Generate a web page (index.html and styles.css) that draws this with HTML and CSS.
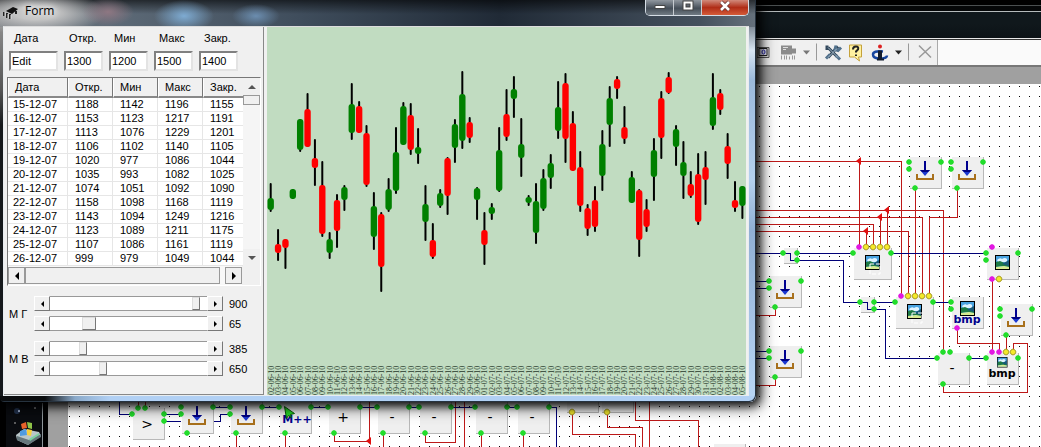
FILE: index.html
```html
<!DOCTYPE html>
<html lang="ru">
<head>
<meta charset="utf-8">
<title>Form</title>
<link rel="stylesheet" href="styles.css">
</head>
<body>
<div class="desktop">
  <div class="taskbar">
    <svg width="42" height="44" viewBox="0 403 42 44">
      <circle cx="17" cy="411" r="3" fill="#35507c" opacity=".6"/><circle cx="19" cy="411" r="1" fill="#cfe0ff"/><circle cx="15" cy="423" r="1" fill="#777"/><circle cx="35" cy="408" r="1" fill="#888"/>
      <path d="M16 435l8-6 15 3 2 4-13 9-11-5z" fill="#b9c6c9"/><path d="M17 436l12 4 12-6v3l-13 8-11-5z" fill="#66777c"/><path d="M29 439l10-6v2l-9 6z" fill="#7bd3a0"/>
      <path d="M21 424l5-2 1 6-5 1z" fill="#e8622b"/><path d="M27 422l5 1 0 6-4-1z" fill="#8fc449"/><path d="M20 431l6-2 1 6-7 1z" fill="#4f9be0"/><path d="M27 429l5 1-1 6-4-1z" fill="#f6cf3c"/>
    </svg>
  </div>
  <section class="editor">
    <div class="toolbar">
      <svg class="tools" width="180" height="24" viewBox="757 41 180 24">
        <path d="M757 48h12v10h-12z" fill="#ddd" stroke="#555"/><path d="M759 49h8v7h-8z" fill="#eef" stroke="#222"/><ellipse cx="763.5" cy="52.5" rx="1.5" ry="2" fill="none" stroke="#22a"/>
        <path d="M781 46h11v3h4v5h-4v1h-11z" fill="#8b8b8b"/><path d="M783 48h5M783 50h3" stroke="#ddd"/><path d="M781.500 56v4M784.500 56v4M786.500 56v4M789.500 57v3M792.500 56v4M794.500 56v4" stroke="#999"/>
        <path d="M803 51h7l-3.500 4z" fill="#777"/><path d="M816.500 44v17M908.500 44v17" stroke="#999"/>
        <path d="M828 48l9 9M827 46v3h3M838 47l-10 11" fill="none" stroke="#31475b" stroke-width="3"/><path d="M836 46l-1 4 3 1 3-3M826 59l4-4M836 56l4 4" fill="none" stroke="#52718c" stroke-width="3"/><path d="M828 48l10 10M837 49l-9 9" stroke="#a8bccb"/>
        <path d="M849.500 45.500h12v12h-3l1 4-5-4h-5z" fill="#fff1a0" stroke="#c5a23b"/><path d="M853 50q0-3 3-3t2 3l-2 2v1M856 55v1.500" fill="none" stroke="#222" stroke-width="2"/>
        <circle cx="880" cy="47" r="2" fill="#d22"/><path d="M883 52q-10-1-10 3t7 4 7-3" fill="none" stroke="#1746a0" stroke-width="2.500"/><path d="M878 51h4v8h2v2h-7v-2h1z" fill="#111b2d"/>
        <path d="M895 51h7l-3.500 4z" fill="#222"/><path d="M919 46l12 12M931 47l-12 11" stroke="#999" stroke-width="1.500"/>
      </svg>
    </div>
    <div class="workspace"></div>
  </section>

  <svg class="diagram">
    <defs>
      <pattern id="grid" x="9" y="6" width="10" height="10" patternUnits="userSpaceOnUse"><rect width="1" height="1" fill="#000"/></pattern>
      <g id="box"><path d="M0 0h32v32h-32z" fill="#b8b8b8"/><path d="M0 0h31v31h-31z" fill="#efefef"/></g>
      <g id="dl"><use href="#box"/><path d="M15 4v12" stroke="#000090" stroke-width="2"/><path d="M10 13h10l-5 6z" fill="#1c38d0"/><path d="M10 13h10l-2 2h-6z" fill="#000080"/><path d="M7 17v5h16v-5" fill="none" stroke="#a8701c" stroke-width="2"/></g>
      <path id="p" d="M-3 0L-2-2 0-3 2-2 3 0 2 2 0 3-2 2z"/>
      <g id="sp"><path d="M0 0h14v16h-14z" fill="#b8b8b8"/><path d="M0 0h13v15h-13z" fill="#efefef"/></g>
      <g id="wide"><path d="M0 0h38v32h-38z" fill="#b8b8b8"/><path d="M0 0h37v31h-37z" fill="#efefef"/></g>
      <g id="pic"><path d="M0 0h15v15h-15z" fill="#000"/><path d="M1 1h13v13h-13z" fill="#4aa3e0"/><path d="M2 5q3-3 5-1 3-2 5 0v3h-9z" fill="#dff3ff"/><path d="M1 7l4-1 9 4v2l-7-1-6 1z" fill="#1d7a45"/><path d="M1 12l8-1 5 1v2h-13z" fill="#d7ea90"/><path d="M7 9l7-4v6z" fill="#185878"/></g>
      <path id="sel" d="M1 1h10v10h-10z" fill="none" stroke="#fff" stroke-dasharray="4 2"/>
      <path id="j" d="M-3 0l5-4v8z"/>
    </defs>
    <rect x="68" y="84" width="100%" height="100%" fill="#fff"/><rect x="68" y="84" width="100%" height="100%" fill="url(#grid)"/>
    <g>
      <use href="#dl" x="910" y="157"/><use href="#dl" x="952" y="157"/><use href="#dl" x="770" y="276"/><use href="#dl" x="770" y="346"/><use href="#dl" x="1001" y="304"/><use href="#dl" x="182" y="402"/><use href="#dl" x="231" y="402"/>
      <use href="#box" x="133" y="408"/><use href="#box" x="280" y="402"/><use href="#box" x="329" y="402"/><use href="#box" x="378" y="402"/><use href="#box" x="420" y="402"/><use href="#box" x="476" y="402"/><use href="#box" x="518" y="402"/><use href="#box" x="567" y="381"/><use href="#box" x="602" y="381"/><use href="#box" x="714" y="444"/>
      <use href="#sp" x="784" y="248"/><use href="#sp" x="861" y="297"/>
      <use href="#wide" x="854" y="248"/><use href="#wide" x="896" y="297"/><use href="#box" x="987" y="248"/><use href="#box" x="952" y="297"/><use href="#box" x="938" y="353"/><use href="#box" x="987" y="353"/>
      <use href="#pic" x="865" y="255"/><use href="#sel" x="869" y="263"/><use href="#pic" x="907" y="304"/><use href="#sel" x="911" y="312"/><use href="#pic" x="995" y="255"/><use href="#pic" x="960" y="301"/><g transform="translate(997 357) scale(.7)"><use href="#pic"/></g>
    </g>
    <g class="wire red">
      <path d="M750 161.500H901.500V296M859.500 161V247M750 210.500H943.500V352M750 217.500H922.500V296M750 224.500H873.500V247M750 231.500H908.500V296M866.500 231V247M880.500 217V247M887.500 210V247M915.500 188V296M957.500 188V217.500H929.500V296M775.500 307V315.500H750M775.500 377V385.500H750M957.500 328V343.500H999.500V352M992.500 279V352M1006.500 335V352M1013.500 352V343.500H1027.500V392.500H943.500V384"/>
      <path d="M138.500 400V408M145.500 400V408M236.500 433V447M285.500 433V447M334.500 433V441.500H369.500V400M383.500 433V447M425.500 433V442.500H455.500V400M464.500 400V447M481.500 433V447M523.500 433V447M572.500 412V434.500H635.500V447M607.500 412V427.500H642.500V447M635.500 400V420.500H698.500V447M649.500 400V447"/>
    </g>
    <g class="wire navy">
      <path d="M750 253.500H783M797 253.500H853M891 253.500H986M783 253.500H790.500V260.500H797M797 260.500H843.500V302.500H860M867.500 302.500V309.500H874M874 302.500H895M860 302.500H868M874 309.500H885.500V358.500H937M933 302.500H951M969 358.500H986M750 281.500H769M750 288.500H769M750 351.500H769M750 358.500H769"/>
      <path d="M119.500 400V414.500H132M164 414.500H181M164 421.500H181M213 407.500H230M214 421.500H220.500V414.500H230M262 407.500H279M311 407.500H328M360 407.500H377M409 407.500H419M451 407.500H475M507 407.500H517M549 407.500H556.500V447"/>
    </g>
    <g fill="#e01010"><use href="#j" x="859" y="161"/><use href="#j" x="866" y="231"/><use href="#j" x="880" y="217"/><use href="#j" x="887" y="210"/><use href="#j" x="369" y="441"/></g>
    <g id="ports"></g>
    <g class="node-text">
      <text class="sign" x="147" y="429">&gt;</text><text class="sign" x="343" y="422">+</text><text class="sign" x="392" y="422">-</text><text class="sign" x="434" y="422">-</text><text class="sign" x="490" y="422">-</text><text class="sign" x="532" y="422">-</text><text class="sign" x="952" y="373">-</text>
      <text class="bold blue" x="297" y="423">M++</text><text class="bold blue" x="967" y="323">bmp</text><text class="bold" x="1002" y="377">bmp</text>
    </g>
    <path d="M284.500 406.500l10 7-4 1 1 3-3-2-2 3z" fill="#27d827" stroke="#065c06"/>
  </svg>

  <main class="window">
    <header class="titlebar">
      <svg width="16" height="16" viewBox="0 0 16 16"><path d="M3 6l7-4 5 2-6 5z" fill="#111"/><path d="M1 7v4M4 8v5M7 9v5M13 6v3" stroke="#222" stroke-width="2"/><path d="M2 7v4M5 9v4M8 10v4" stroke="#ddd"/></svg>
      <h1>Form</h1>
      <div class="caption">
        <button aria-label="Свернуть"><svg width="12" height="12"><path d="M1 5.500h10v3h-10z" fill="#fff" stroke="#444"/></svg></button>
        <button aria-label="Развернуть"><svg width="12" height="12"><path d="M2.500 2.500h7v6h-7z" fill="none" stroke="#444" stroke-width="4"/><path d="M2.500 2.500h7v6h-7z" fill="none" stroke="#fff" stroke-width="2"/></svg></button>
        <button class="close" aria-label="Закрыть"><svg width="12" height="12"><path d="M2 2l8 8M10 2l-8 8" stroke="#633" stroke-width="4"/><path d="M2 2l8 8M10 2l-8 8" stroke="#fff" stroke-width="2.500"/></svg></button>
      </div>
    </header>
    <div class="client">
      <section class="panel">
        <form class="fields">
          <label>Дата<input value="Edit"></label>
          <label>Откр.<input value="1300"></label>
          <label>Мин<input value="1200"></label>
          <label>Макс<input value="1500"></label>
          <label>Закр.<input value="1400"></label>
        </form>
        <div class="list">
          <table>
            <colgroup><col class="wide"><col><col><col><col class="last"></colgroup>
            <thead><tr><th>Дата</th><th>Откр.</th><th>Мин</th><th>Макс</th><th>Закр.</th></tr></thead>
            <tbody>
              <tr><td>15-12-07</td><td>1188</td><td>1142</td><td>1196</td><td>1155</td></tr>
              <tr><td>16-12-07</td><td>1153</td><td>1123</td><td>1217</td><td>1191</td></tr>
              <tr><td>17-12-07</td><td>1113</td><td>1076</td><td>1229</td><td>1201</td></tr>
              <tr><td>18-12-07</td><td>1106</td><td>1102</td><td>1140</td><td>1105</td></tr>
              <tr><td>19-12-07</td><td>1020</td><td>977</td><td>1086</td><td>1044</td></tr>
              <tr><td>20-12-07</td><td>1035</td><td>993</td><td>1082</td><td>1025</td></tr>
              <tr><td>21-12-07</td><td>1074</td><td>1051</td><td>1092</td><td>1090</td></tr>
              <tr><td>22-12-07</td><td>1158</td><td>1098</td><td>1168</td><td>1119</td></tr>
              <tr><td>23-12-07</td><td>1143</td><td>1094</td><td>1249</td><td>1216</td></tr>
              <tr><td>24-12-07</td><td>1123</td><td>1089</td><td>1211</td><td>1175</td></tr>
              <tr><td>25-12-07</td><td>1107</td><td>1086</td><td>1161</td><td>1119</td></tr>
              <tr><td>26-12-07</td><td>999</td><td>979</td><td>1049</td><td>1044</td></tr>
            </tbody>
          </table>
          <div class="vbar"><button class="arrow up" aria-label="Вверх"></button><div class="vthumb"></div><button class="arrow down" aria-label="Вниз"></button></div>
          <div class="hbar"><button class="arrow left" aria-label="Влево"></button><div class="hthumb"></div><button class="arrow right" aria-label="Вправо"></button></div>
        </div>
        <div class="scale">
          <span class="name">М Г</span>
          <div class="bars">
            <div class="bar"><button class="arrow left" aria-label="Меньше"></button><input id="g1" aria-label="М Г 1" type="range" max="1000" value="953"><button class="arrow right" aria-label="Больше"></button><output for="g1">900</output></div>
            <div class="bar"><button class="arrow left" aria-label="Меньше"></button><input id="g2" class="big" aria-label="М Г 2" type="range" max="1000" value="224"><button class="arrow right" aria-label="Больше"></button><output for="g2">65</output></div>
          </div>
        </div>
        <div class="scale">
          <span class="name">М В</span>
          <div class="bars">
            <div class="bar"><button class="arrow left" aria-label="Меньше"></button><input id="v1" aria-label="М В 1" type="range" max="1000" value="195"><button class="arrow right" aria-label="Больше"></button><output for="v1">385</output></div>
            <div class="bar"><button class="arrow left" aria-label="Меньше"></button><input id="v2" aria-label="М В 2" type="range" max="1000" value="329"><button class="arrow right" aria-label="Больше"></button><output for="v2">650</output></div>
          </div>
        </div>
      </section>
      <svg class="chart" id="chart" viewBox="267 27 479 368" preserveAspectRatio="xMinYMin meet"></svg>
    </div>
  </main>
</div>
<script src="chart.js"></script>
</body>
</html>
```
FILE: styles.css
```css
* { box-sizing: border-box; }
body { margin: 0; background: #000; font: 11px/14px "Liberation Sans", Arial, sans-serif; color: #000; }
button { padding: 0; margin: 0; border: 0; font: inherit; }

.desktop { position: relative; height: 100vh; overflow: hidden; background: linear-gradient(#000 0 5px, #4a4f50 5px 6px, #050708 6px 11px, #b5babb 11px 12px, #10181c 12px 24px, #0c1216 38px, #e8e8e8 38px 39px, #333 39px 40px, #000 40px); }
.taskbar { position: absolute; left: 0; bottom: 0; width: 43px; height: 44px; background: linear-gradient(90deg, #000 0 6px, #0a0c10 6px); border-right: 1px solid #8f979c; }
.editor { position: absolute; left: 48px; right: 0; top: 40px; bottom: 0; background: #a0a0a0; }
.toolbar { display: flex; height: 27px; background: #fafafa; border-bottom: 2px solid #777; }
.tools { display: block; box-sizing: content-box; padding-left: 709px; background: #f0f0f0; border-right: 1px solid #aaa; height: 25px; }
.diagram { position: absolute; left: 0; top: 0; width: 100%; height: 100%; }
.wire { fill: none; stroke-width: 1; }
.wire path { shape-rendering: crispEdges; }
.red { stroke: #bd1818; }
.navy { stroke: #000078; }
.node-text { text-anchor: middle; }
.sign { font: 14px "DejaVu Sans", sans-serif; }
.bold { font: bold 11px "DejaVu Sans", sans-serif; }
.blue { fill: #00008c; }

.window {
  position: absolute; left: 0; top: 0; width: 756px; padding: 0 7px 6px 3px; border-radius: 0 0 6px 4px;
  background:
    radial-gradient(ellipse 30px 16px at 184px 16px, #7eabd2, transparent),
    radial-gradient(ellipse 26px 14px at 108px 12px, #8e7782, transparent),
    radial-gradient(ellipse 70px 22px at 36px 13px, #c4c4c4 30%, transparent),
    radial-gradient(ellipse 24px 12px at 256px 16px, #6b8daf, transparent),
    linear-gradient(#0009, #0000 14px) 0 0 / 100% 26px no-repeat,
    linear-gradient(90deg, #777b80, #5c6976 120px, #3f4d5c 300px, #202a36 500px, #44505d 700px, #66717c) 0 0 / 100% 27px no-repeat,
    linear-gradient(90deg, #0a0c0e 45px, #8aa9c9 75px, #b1d0f4 110px) 0 100% / 100% 6px no-repeat,
    linear-gradient(#66717c 20px, #d8e5f2 50px, #9bb9da 80px, #b4d0ee 180px, #90afd3 230px, #b9d6f5) 100% 0 / 7px 100% no-repeat,
    linear-gradient(#888 30px, #555 90px, #15181b 125px);
  box-shadow: inset -1px -1px #26323e, 3px 3px 8px #000c, 4px 4px 16px #000c;
}
.titlebar { display: flex; align-items: center; height: 26px; position: relative; }
.titlebar h1 { margin: 0 0 4px 6px; font: 12px/16px "Open Sans", "Noto Sans", sans-serif; text-shadow: 0 0 6px #fff, 0 0 8px #fff; }
.caption { display: flex; align-self: flex-start; margin-left: auto; height: 16px; border: 1px solid #d5dde5; border-top: 0; border-radius: 0 0 5px 5px; overflow: hidden; }
.caption button { display: grid; place-items: start center; width: 28px; height: 15px; background: linear-gradient(#90979f, #454e58 55%, #717b84); border-right: 1px solid #c6cbd0; }
.caption .close { width: 46px; border: 0; background: linear-gradient(#d18a7b, #b02d17 50%, #d45b38); }
.client { display: flex; border: 1px solid #e8edf0; border-top-color: #ddd; background: #f0f0f0; }
.panel { width: 260px; padding-bottom: 17px; border-right: 1px solid #888; border-bottom: 1px solid #888; }
.fields { display: grid; grid-template-columns: 49px repeat(4, 39px); gap: 6px; padding: 4px 5px 6px; }
.fields label { display: flex; flex-direction: column; gap: 6px; text-indent: 5px; }
.fields input { width: 100%; height: 20px; padding: 0 1px; border: 2px solid; border-color: #808080 #e3e3e3 #e3e3e3 #808080; background: #fff; font: inherit; text-indent: 0; outline: 0; border-radius: 0; }
.list { display: grid; grid-template-columns: 1fr 17px; margin: 0 2px 0 3px; border: 1px solid #888; border-color: #777 #fff #fff #777; background: #f0f0f0; }
table { width: 100%; table-layout: fixed; border-collapse: separate; border-spacing: 0; background: #fff; }
col { width: 45px; } col.wide { width: 60px; } col.last { width: 40px; }
th, td { padding: 0; font-weight: normal; text-align: left; white-space: nowrap; overflow: hidden; }
thead th { height: 20px; padding-left: 6px; background: #f0f0f0; border-right: 1px solid #777; border-bottom: 2px solid #888; border-left: 1px solid #fff; line-height: 18px; }
th:last-child { border-right: 0; }
td { height: 14px; padding-left: 7px; line-height: 13px; border-right: 1px solid #e6e6e6; border-bottom: 1px solid #e6e6e6; }
td:first-child { padding-left: 5px; }
td:last-child { border-right: 0; }
.vbar { display: flex; flex-direction: column; background: #f5f5f5; }
.vbar .down { margin-top: auto; }
.vthumb { height: 10px; border: 1px solid #999; background: #f0f0f0; }
.hbar { display: flex; width: 234px; height: 19px; padding-top: 1px; background: #f8f8f8; }
.hbar .arrow { height: 17px; border: 1px solid #999; }
.hthumb { flex: 1; height: 17px; margin-right: 5px; border: 1px solid #999; background: #f0f0f0; }
.arrow { display: grid; place-items: center; width: 17px; height: 17px; background: #f0f0f0; flex: none; }
.arrow::before { content: ""; border: 4px solid transparent; }
.up::before { border-top: 0; border-bottom-color: #555; }
.down::before { border-bottom: 0; border-top-color: #555; }
.left::before { border-left: 0; border-right-color: #000; }
.right::before { border-right: 0; border-left-color: #000; }
.scale { display: flex; align-items: center; margin: 10px 0 0 5px; }
.name { width: 25px; white-space: nowrap; }
.bars { display: grid; gap: 5px; }
.bar { display: flex; align-items: center; height: 15px; }
.bar .arrow { width: 16px; height: 15px; border: 1px solid #777; border-color: #fff #777 #777 #fff; }
.bar .arrow::before { border-width: 3px; }
.bar .left::before { border-left: 0; } .bar .right::before { border-right: 0; }
.bar output { margin-left: 6px; }
input[type="range"] { appearance: none; width: 157px; height: 15px; margin: 0; background: #fff; border: 1px solid #999; border-width: 1px 0; }
input[type="range"]::-webkit-slider-thumb { appearance: none; width: 8px; height: 13px; background: #f0f0f0; border: 1px solid #777; border-color: #ddd #777 #777 #ddd; }
input.big::-webkit-slider-thumb { width: 14px; }
.chart { display: block; flex: 1; min-width: 0; margin: 0 2px 0 3px; background: #c1dcc1; overflow: visible; }
.date { font: 8px "Liberation Serif", serif; fill: #26382a; }
```
FILE: chart.js
```js
const NS = "http://www.w3.org/2000/svg";
function add(parent, tag, attrs, text) {
  const el = document.createElementNS(NS, tag);
  for (const k in attrs) el.setAttribute(k, attrs[k]);
  if (text) el.textContent = text;
  parent.appendChild(el);
}

// wick top, wick bottom, body top, body bottom, direction
const candles = `183 212 198 210 g|229 261 244 253 r|239 269 239 248 r|189 199 189 199 g|119 152 119 150 g|93 147 109 147 r|139 186 158 168 r|161 237 185 234 r|232 259 239 253 g|194 248 200 231 r|185 211 187 200 g|83 140 104 133 g|101 133 106 133 r|125 187 133 185 r|192 250 206 237 g|212 292 214 267 r|178 212 189 210 g|127 194 152 191 g|102 145 106 145 g|103 155 115 150 r|128 164 147 154 g|185 241 204 222 g|223 259 240 257 r|189 208 193 206 g|157 215 158 196 r|119 163 124 148 g|71 149 94 141 g|117 143 122 138 r|187 220 188 200 g|212 265 230 245 r|203 220 207 214 g|127 192 150 191 g|89 141 114 137 r|76 118 89 99 g|118 177 144 158 g|195 206 197 203 g|183 244 201 233 g|169 211 178 209 g|154 189 163 178 g|81 139 107 131 g|73 163 83 139 r|111 171 123 171 r|151 212 167 206 r|204 236 208 229 r|186 232 200 227 r|130 191 144 176 g|86 147 98 125 g|76 99 79 89 r|106 144 127 139 r|171 203 177 203 g|189 257 190 240 r|199 232 209 227 r|138 201 150 177 g|91 159 98 138 r|72 94 77 93 r|125 166 129 147 g|141 199 162 176 g|171 198 184 196 r|153 225 174 222 r|151 205 167 180 r|73 130 97 126 g|89 115 93 110 r|133 179 146 164 r|181 212 200 208 r|186 219 186 206 g`;
const chart = document.getElementById("chart");
const step = 7.37;
candles.split("|").forEach((row, i) => {
  const [wt, wb, bt, bb, dir] = row.split(" ");
  const x = 270.7 + i * step;
  add(chart, "rect", { x: x - 1, y: wt, width: 2, height: wb - wt, rx: 1, fill: "#000" });
  add(chart, "rect", { x: x - 3.2, y: bt, width: 6.4, height: bb - bt, rx: 3, fill: dir === "g" ? "#008000" : "#f00" });
  const d = new Date(Date.UTC(2010, 5, 2 + i));
  const p = n => String(n).padStart(2, "0");
  add(chart, "text", { class: "date", transform: `translate(${x + 3} 395) rotate(-90)` }, `${p(d.getUTCDate())}-${p(d.getUTCMonth() + 1)}-10`);
});

// connection points of the diagram nodes, grouped by colour
const points = {
  "#22dd2b": "909,162 909,169 941,162 915,188 951,162 951,169 983,162 957,188 769,281 769,288 801,281 775,307 769,351 769,358 801,351 775,377 1000,309 1000,316 1032,309 1006,335 181,407 181,414 213,407 187,433 230,407 230,414 262,407 236,433 279,407 311,407 285,433 328,407 360,407 334,433 377,407 409,407 383,433 419,407 451,407 425,433 475,407 507,407 481,433 517,407 549,407 523,433 132,414 164,414 164,421 138,408 145,408 853,253 891,253 895,302 933,302 783,253 797,253 797,260 860,302 874,302 874,309 986,253 986,260 1018,253 951,302 951,309 937,358 969,358 943,352 950,352 943,384 986,358 1018,358",
  "#e218e2": "859,247 901,296 992,247 992,279 957,328 992,352 999,352",
  "#f4e92a": "866,247 873,247 880,247 887,247 908,296 915,296 922,296 929,296 999,279 1006,352 1013,352 572,412 607,412"
};
const ports = document.getElementById("ports");
for (const color in points) {
  for (const pt of points[color].split(" ")) {
    const [x, y] = pt.split(",");
    const attrs = { href: "#p", x, y, fill: color };
    if (color === "#f4e92a") attrs.stroke = "#a89c28";
    add(ports, "use", attrs);
  }
}
```
